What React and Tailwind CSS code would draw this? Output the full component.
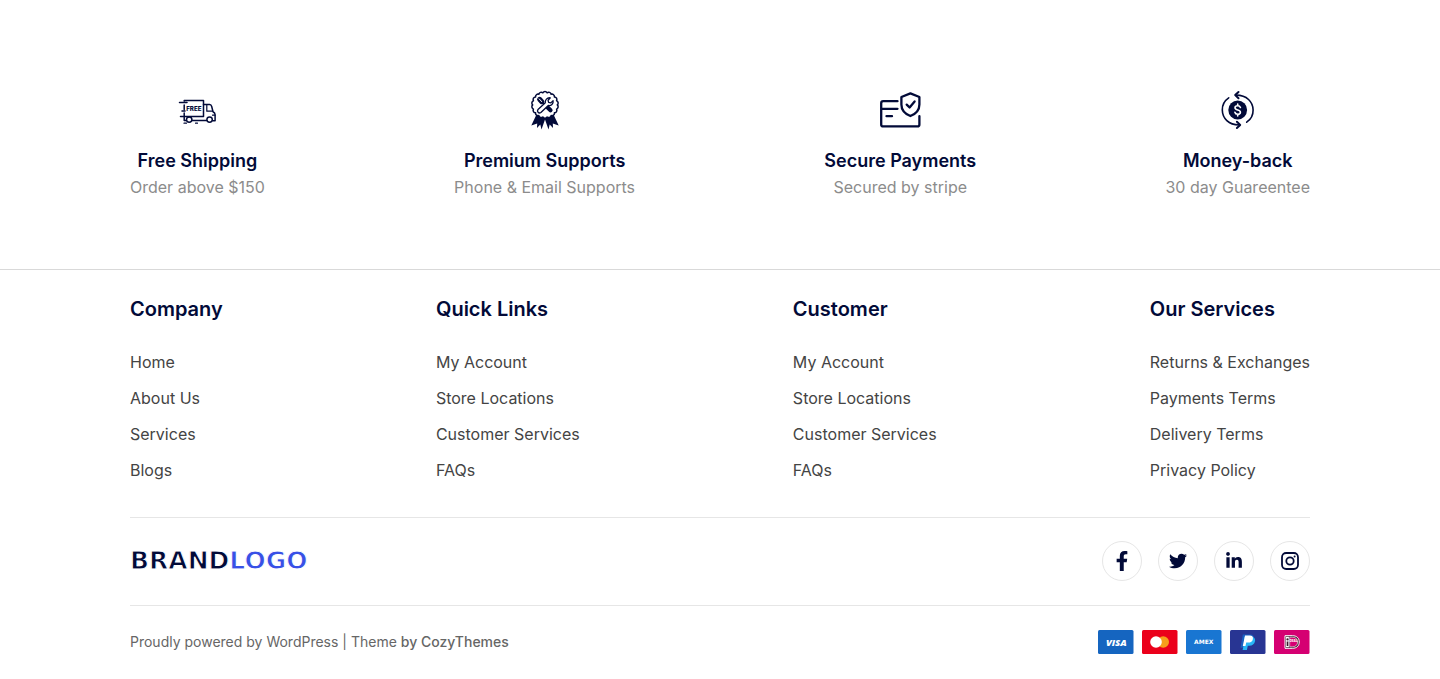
import { FaFacebookF, FaTwitter, FaLinkedinIn } from "react-icons/fa";

function TruckIcon() {
  return (
    <svg viewBox="0 0 40 40" className="h-10 w-10" fill="none" stroke="currentColor" strokeWidth="1.5" strokeLinecap="round" strokeLinejoin="round" aria-hidden="true">
      <path d="M7.2 11v-.6h19.300v16H3.500M7.200 15v4.500M7.200 23v3.400M2.500 12.500h7.500M5 21h3" />
      <path d="M26.500 14.500h6.200c1.200 0 1.700.9 2 2l1.300 5.200c1.300.6 2.100 1.500 2.100 3v6h-2.300M29.600 30.600H15.200M9 30.600H7.200v-4" />
      <path d="M29.800 14.800v6.400h5.900M35.500 25.200h2.400M9.500 33.200h-2.500M20.500 33.200h-2" strokeWidth="1.200" />
      <circle cx="12.200" cy="29.600" r="2.700" />
      <circle cx="32.600" cy="29.600" r="2.700" />
      <text x="9.200" y="20.600" fontSize="6.200" fontWeight="800" fontFamily="Inter, sans-serif" fill="currentColor" stroke="none">FREE</text>
    </svg>
  );
}

function scallop(cx, cy, r, n) {
  const pts = Array.from({ length: n }, (_, i) => {
    const a = ((i + 0.5) / n) * Math.PI * 2 - Math.PI / 2;
    return [(cx + r * Math.cos(a)).toFixed(2), (cy + r * Math.sin(a)).toFixed(2)];
  });
  return `M${pts[0].join(" ")}` + pts.slice(1).concat([pts[0]]).map((p) => `A2.500 2.500 0 0 1 ${p.join(" ")}`).join("") + "Z";
}

function BadgeIcon() {
  return (
    <svg viewBox="0 0 40 40" className="h-10 w-10" fill="none" stroke="currentColor" strokeLinecap="round" strokeLinejoin="round" aria-hidden="true">
      <path fill="currentColor" stroke="none" d="M11.500 24.500 6.300 35.500l5.900-2-.2 4.500 3.300-3.500 1.200 5L20 29.500l3.500 10 1.200-5 3.300 3.500-.2-4.500 5.900 2-5.200-11Z" />
      <path fill="white" strokeWidth="1.500" d={scallop(20, 14.900, 12.300, 18)} />
      <path strokeWidth="5" d="m14.600 9.300 2.200 2.400" />
      <path stroke="white" strokeWidth="1" d="m14.200 8.900 2.600 2.800" />
      <path strokeWidth="1.800" d="m17.500 12.300 4 4" />
      <path strokeWidth="4.200" d="m22.700 17.400 2.800 2.800" />
      <path fill="white" strokeWidth="1.300" d="m13 19.500 7.300-6.800c-.5-2.600 1.800-5.400 5-4.900l-2.200 2.500.5 2.100 2.200.5 2.300-2.300c.6 3.200-2.100 5.500-4.800 4.900l-7.400 7c-2.200 1.400-4.400-1-2.900-3Z" />
    </svg>
  );
}

function SecureIcon() {
  return (
    <svg viewBox="0 0 44 40" className="h-10 w-11" fill="none" stroke="currentColor" strokeWidth="2.300" strokeLinecap="round" strokeLinejoin="round" aria-hidden="true">
      <path d="M19.500 11.200H5.200a2 2 0 0 0-2 2v21.200a2 2 0 0 0 2 2h34.200a2 2 0 0 0 2-2v-8.200M3.500 18.800h16M8.500 26.200h5.500" />
      <path d="m32.400 3.400 9 3.600v7.400c0 5.300-3.600 9.400-9 11.600-5.400-2.200-9-6.300-9-11.600V7Z" />
      <path d="m28.700 14.600 2.900 2.900 5-6" />
    </svg>
  );
}

function MoneyIcon() {
  return (
    <svg viewBox="0 0 40 40" className="h-10 w-10" fill="none" stroke="currentColor" strokeWidth="1.600" strokeLinecap="round" strokeLinejoin="round" aria-hidden="true">
      <circle cx="19.700" cy="20" r="9.400" fill="currentColor" stroke="none" />
      <path d="M10.700 7.800C6.700 10.500 4.200 15 4.300 20c.1 8.200 6.400 15 16.900 14.900M28.700 32.200c4-2.700 6.500-7.200 6.400-12.200C35 11.800 28.700 5.100 18.200 5.100" />
      <path d="m20.500 2-3.300 3.100 3.300 3.200M18.900 31.700l3.300 3.200-3.300 3.100" strokeWidth="2" />
      <path d="M22.400 17.500c-.4-1.200-1.300-1.700-2.700-1.700-1.600 0-2.700.8-2.700 2s1 1.800 2.700 2.200 2.700 1 2.700 2.200-1.100 2-2.700 2c-1.500 0-2.500-.6-2.800-1.900M19.700 14v1.800M19.700 24.200V26" stroke="white" strokeWidth="1.600" />
    </svg>
  );
}

function InstagramIcon({ className }) {
  return (
    <svg viewBox="0 0 18 18" className={className} fill="none" stroke="currentColor" strokeWidth="1.800" aria-hidden="true">
      <rect x="1" y="1" width="16" height="16" rx="4.200" />
      <circle cx="9" cy="9" r="3.700" />
      <circle cx="13.600" cy="4.400" r="1" fill="currentColor" stroke="none" />
    </svg>
  );
}

const features = [
  { Icon: TruckIcon, title: "Free Shipping", text: "Order above $150" },
  { Icon: BadgeIcon, title: "Premium Supports", text: "Phone & Email Supports" },
  { Icon: SecureIcon, title: "Secure Payments", text: "Secured by stripe" },
  { Icon: MoneyIcon, title: "Money-back", text: "30 day Guareentee" },
];

const columns = [
  { title: "Company", links: ["Home", "About Us", "Services", "Blogs"] },
  { title: "Quick Links", links: ["My Account", "Store Locations", "Customer Services", "FAQs"] },
  { title: "Customer", links: ["My Account", "Store Locations", "Customer Services", "FAQs"] },
  { title: "Our Services", links: ["Returns & Exchanges", "Payments Terms", "Delivery Terms", "Privacy Policy"] },
];

const socials = [
  { Icon: FaFacebookF, name: "Facebook", size: "h-5 w-5" },
  { Icon: FaTwitter, name: "Twitter", size: "h-[18px] w-[18px]" },
  { Icon: FaLinkedinIn, name: "LinkedIn", size: "h-[18px] w-[18px]" },
  { Icon: InstagramIcon, name: "Instagram", size: "h-[18px] w-[18px]" },
];

function PaymentCard({ name, color, children }) {
  return (
    <svg viewBox="0 0 36 24" className="h-6 w-9" role="img" aria-label={name}>
      <rect width="35.500" height="24" rx="1.500" fill={color} />
      {children}
    </svg>
  );
}

function Payments() {
  return (
    <div className="flex gap-2">
      <PaymentCard name="Visa" color="#1565c0">
        <text x="18.300" y="15.700" textAnchor="middle" fontFamily="Open Sans, sans-serif" fontSize="9.500" fontWeight="800" fontStyle="italic" fill="white">VISA</text>
      </PaymentCard>
      <PaymentCard name="Mastercard" color="#eb001b">
        <circle cx="21.200" cy="12" r="5.800" fill="#f79e1b" />
        <circle cx="14" cy="12" r="5.800" fill="white" />
      </PaymentCard>
      <PaymentCard name="American Express" color="#1976d2">
        <text x="17.700" y="14.200" textAnchor="middle" fontFamily="DejaVu Sans, sans-serif" fontSize="6" fontWeight="700" fill="white">AMEX</text>
      </PaymentCard>
      <PaymentCard name="PayPal" color="#283593">
        <path d="M12.800 4.500h6.700c3.500 0 5 1.700 4.400 4.700-.6 3.100-2.700 4.600-6 4.600h-2.200l-.8 4h-4.400Z" fill="#1a5fc0" />
        <path d="M14.500 7h8.500c1.800.9 2.400 2.400 2 4.300-.6 3-2.700 4.400-5.700 4.400h-1.500l-.9 4.300h-4.300l1.100-5.300Z" fill="#29b6f6" />
        <path d="M15 5.500h4.700c2.400 0 3.600 1.200 3.200 3.400-.4 2.500-2.200 3.700-4.800 3.700h-1.900l-.7 3.400h-2.700Z" fill="white" />
      </PaymentCard>
      <PaymentCard name="iDEAL" color="#d50072">
        <path d="M11 5.700h7.300c4.600 0 6.900 2.400 6.900 6.300s-2.300 6.300-6.900 6.300H11Z" fill="#3a1a2c" stroke="white" strokeWidth="1" />
        <path d="M15.700 7.200h2.600c3.500 0 5.300 1.800 5.300 4.800s-1.800 4.800-5.300 4.800h-2.600Z" fill="#d50072" stroke="white" strokeWidth=".6" />
        <path d="M12 6.800h2.900v10.400H12Z" fill="white" />
        <circle cx="13.500" cy="9.400" r="1.100" fill="#3a1a2c" />
        <path d="M12.700 11.500h1.600V16h-1.600Z" fill="#3a1a2c" />
        <text x="15.600" y="12.400" fontFamily="Inter, sans-serif" fontSize="3" fontWeight="800" fill="white">DEAL</text>
      </PaymentCard>
    </div>
  );
}

export default function App() {
  return (
    <div className="min-h-screen bg-white font-['Inter',sans-serif] text-[#020a38]">
      <section className="border-b border-[#d9d9d9] px-6 pt-[90px] pb-[70px]">
        <div className="mx-auto flex max-w-[1180px] flex-wrap justify-between gap-y-8">
          {features.map(({ Icon, title, text }) => (
            <div key={title} className="flex flex-col items-center text-center">
              <Icon />
              <h3 className="mt-[17px] text-lg font-semibold">{title}</h3>
              <p className="text-base text-[#8c8c8c]">{text}</p>
            </div>
          ))}
        </div>
      </section>

      <footer className="px-6">
        <div className="mx-auto max-w-[1180px]">
          <nav aria-label="Footer" className="flex flex-wrap justify-between gap-y-8 border-b border-[#e6e6e6] pt-[25px] pb-[35px]">
            {columns.map(({ title, links }) => (
              <div key={title}>
                <h2 className="text-xl font-semibold">{title}</h2>
                <ul className="mt-[27px] flex flex-col gap-3">
                  {links.map((link) => (
                    <li key={link}>
                      <a href="#" className="block text-base text-[#444]">{link}</a>
                    </li>
                  ))}
                </ul>
              </div>
            ))}
          </nav>

          <div className="flex flex-wrap items-center justify-between gap-4 border-b border-[#e6e6e6] pt-[23px] pb-6">
            <a href="#" className="font-['DejaVu_Sans',sans-serif] text-[25px] leading-8 font-bold [-webkit-text-stroke:1px_white]">
              BRAND<span className="text-[#3850e6]">LOGO</span>
            </a>
            <div className="flex gap-4">
              {socials.map(({ Icon, name, size }) => (
                <a key={name} href="#" aria-label={name} className="flex h-10 w-10 items-center justify-center rounded-full border border-[#e6e6e6]">
                  <Icon className={size} />
                </a>
              ))}
            </div>
          </div>

          <div className="flex flex-wrap items-center justify-between gap-4 py-6">
            <p className="text-sm text-[#666]">
              Proudly powered by WordPress | Theme <a href="#" className="font-medium">by CozyThemes</a>
            </p>
            <Payments />
          </div>
        </div>
      </footer>
    </div>
  );
}
